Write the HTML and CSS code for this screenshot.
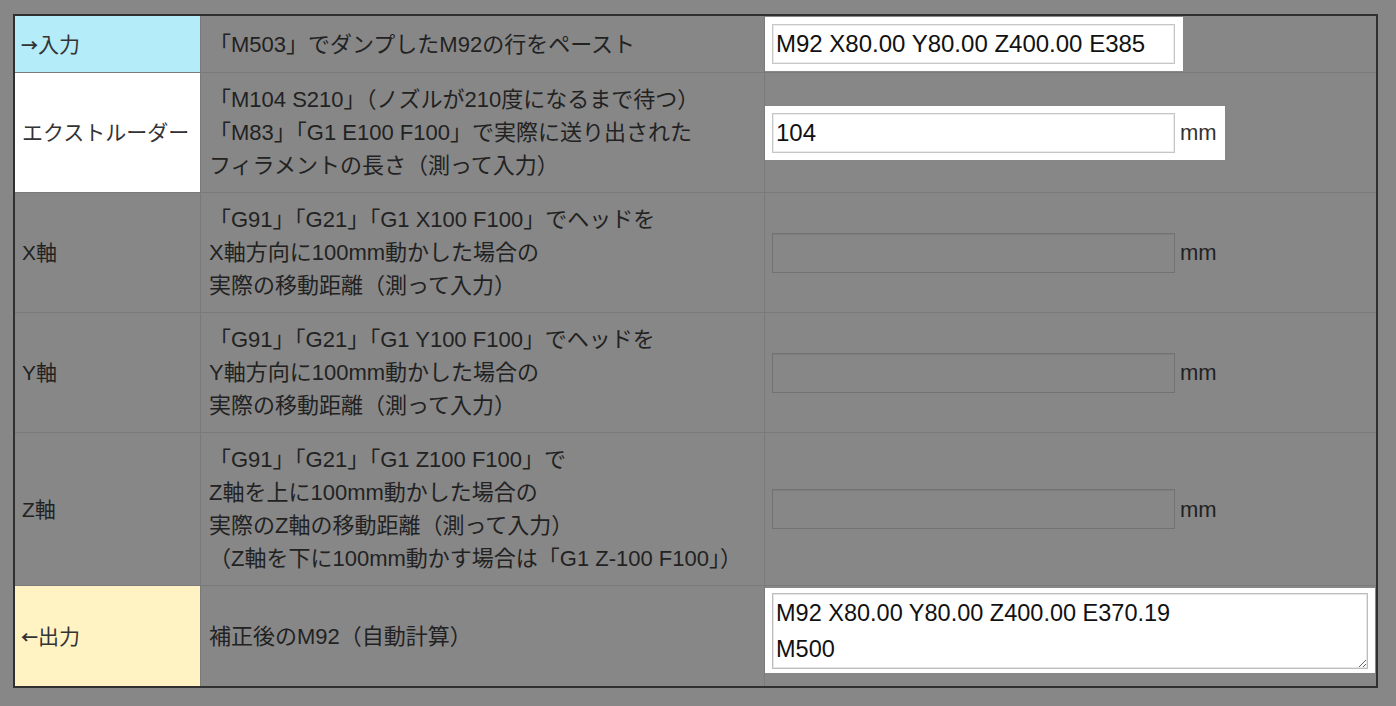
FILE: index.html
```html
<!DOCTYPE html>
<html lang="ja">
<head>
<meta charset="utf-8">
<title>M92 補正</title>
<link rel="stylesheet" href="styles.css">
</head>
<body>
<table class="calib">
  <colgroup><col class="c1"><col class="c2"><col class="c3"></colgroup>
  <tr>
    <td class="lbl lbl-in"><span class="arrow">→</span>入力</td>
    <td class="desc">「M503」でダンプしたM92の行をペースト</td>
    <td class="val"><span class="field spot"><input class="txt" type="text" value="M92 X80.00 Y80.00 Z400.00 E385"></span></td>
  </tr>
  <tr>
    <td class="lbl lbl-ext">エクストルーダー</td>
    <td class="desc">「M104 S210」（ノズルが210度になるまで待つ）<br>「M83」「G1 E100 F100」で実際に送り出された<br>フィラメントの長さ（測って入力）</td>
    <td class="val"><span class="field spot"><input class="txt" type="text" value="104"><span class="unit">mm</span></span></td>
  </tr>
  <tr>
    <td class="lbl">X軸</td>
    <td class="desc">「G91」「G21」「G1 X100 F100」でヘッドを<br>X軸方向に100mm動かした場合の<br>実際の移動距離（測って入力）</td>
    <td class="val"><span class="field"><input class="txt dim" type="text"><span class="unit">mm</span></span></td>
  </tr>
  <tr>
    <td class="lbl">Y軸</td>
    <td class="desc">「G91」「G21」「G1 Y100 F100」でヘッドを<br>Y軸方向に100mm動かした場合の<br>実際の移動距離（測って入力）</td>
    <td class="val"><span class="field"><input class="txt dim" type="text"><span class="unit">mm</span></span></td>
  </tr>
  <tr>
    <td class="lbl">Z軸</td>
    <td class="desc">「G91」「G21」「G1 Z100 F100」で<br>Z軸を上に100mm動かした場合の<br>実際のZ軸の移動距離（測って入力）<br>（Z軸を下に100mm動かす場合は「G1 Z-100 F100」）</td>
    <td class="val"><span class="field"><input class="txt dim" type="text"><span class="unit">mm</span></span></td>
  </tr>
  <tr class="last">
    <td class="lbl lbl-out"><span class="arrow">←</span>出力</td>
    <td class="desc">補正後のM92（自動計算）</td>
    <td class="val val-out"><span class="field spot field-area"><textarea class="area">M92 X80.00 Y80.00 Z400.00 E370.19
M500</textarea></span></td>
  </tr>
</table>
</body>
</html>
```

FILE: styles.css
```css
html, body {
  margin: 0;
  background: #878787;
}

body {
  padding: 14px 0 0 13px;
  font-family: "Liberation Sans", "Noto Sans CJK JP", sans-serif;
  color: #222;
}

.calib {
  width: 1365px;
  table-layout: fixed;
  border-collapse: separate;
  border-spacing: 0;
  border: 2px solid #303030;
}

.c1 { width: 186px; }
.c2 { width: 564px; }

.calib td {
  border-right: 1px solid #7a7a7a;
  border-bottom: 1px solid #7a7a7a;
  vertical-align: middle;
  font-size: 21px;
  line-height: 33px;
}

.calib td:last-child { border-right: none; }
.calib tr.last td { border-bottom: none; }

.lbl {
  padding: 10px 7px;
  white-space: nowrap;
}

.arrow {
  display: inline-block;
  width: 16px;
  overflow: visible;
  font-family: "Noto Sans CJK JP", sans-serif;
  font-size: 17px;
  font-weight: 700;
  letter-spacing: -1px;
  text-indent: -1px;
}

.lbl-in { background: #b4ecfa; color: #333; }
.lbl-ext { background: #ffffff; color: #333; }
.lbl-out { background: #fff3c3; color: #333; }

.calib td.desc {
  padding: 10px 8px;
  white-space: nowrap;
  font-size: 22px;
}

.val {
  padding: 1px 0;
}

.calib td.val-out {
  vertical-align: top;
  padding: 2px 0 13px 0;
}

.field {
  display: inline-flex;
  align-items: center;
  padding: 7px 8px 7px 7px;
  vertical-align: middle;
}

.spot {
  background: #ffffff;
  color: #333;
}

.txt {
  box-sizing: border-box;
  width: 403px;
  height: 40px;
  margin: 0;
  padding: 0 3px;
  border: 1px solid #c6c6c6;
  box-shadow: inset 0 0 0 1px #ececec;
  background: #ffffff;
  font-family: "Liberation Sans", sans-serif;
  font-size: 24px;
  color: #111;
  outline: none;
}

.txt.dim {
  border-color: #727272;
  box-shadow: inset 0 1px 0 #7e7e7e;
  background: #878787;
}

.unit {
  margin-left: 5px;
  font-size: 22px;
}

.field-area {
  padding: 5px 7px 4px 7px;
}

.area {
  display: block;
  box-sizing: border-box;
  width: 596px;
  height: 76px;
  margin: 0;
  padding: 1px 3px;
  border: 1px solid #bdbdbd;
  box-shadow: inset 0 0 0 1px #e6e6e6;
  background: #ffffff;
  font-family: "Liberation Sans", sans-serif;
  font-size: 23.5px;
  line-height: 36px;
  color: #111;
  overflow: hidden;
  outline: none;
}
```
